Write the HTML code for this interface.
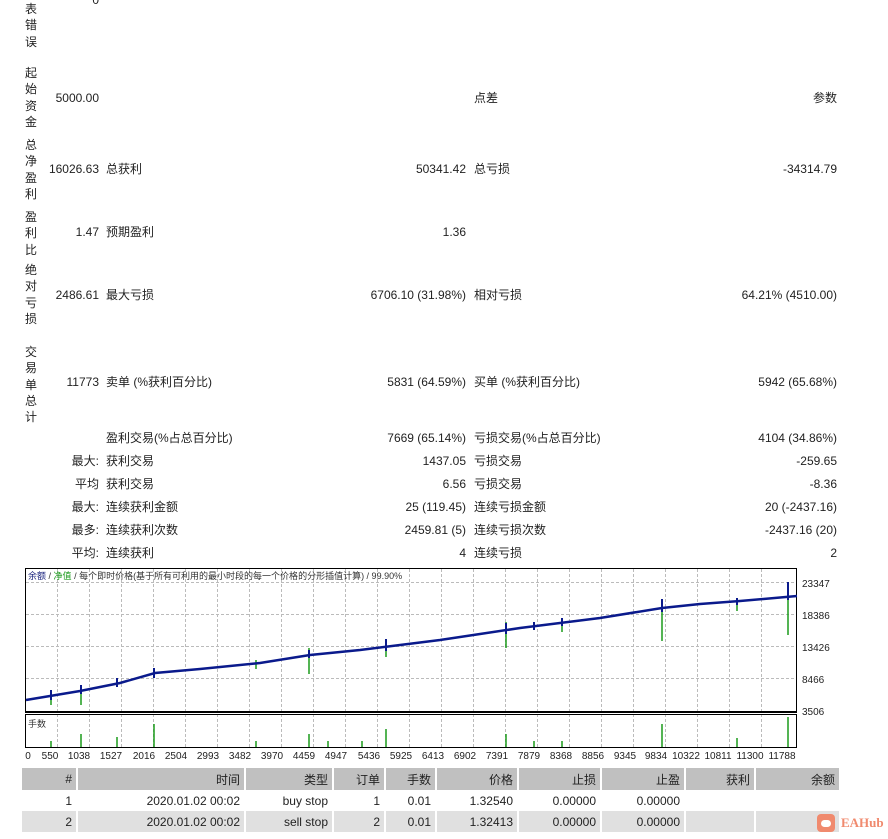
<!DOCTYPE html>
<html><head><meta charset="utf-8"><style>
body{margin:0;width:888px;height:839px;background:#fff;position:relative;overflow:hidden;font-family:"Liberation Sans","Noto Sans CJK SC",sans-serif;font-size:12px;color:#222}
.a{position:absolute;white-space:nowrap;line-height:14px}
.v{position:absolute;left:24px;width:14px;text-align:center;line-height:16.3px;font-size:12px}
.r{position:absolute;white-space:nowrap;line-height:14px;text-align:right}
table{position:absolute;left:22px;top:768px;border-collapse:collapse;font-size:12px;table-layout:fixed;width:818px}
td{text-align:right;padding:0 4px;height:21px;border-right:2px solid #fff;color:#222;box-sizing:border-box;overflow:hidden;white-space:nowrap}
tr.h td{background:#c0c0c0;height:22px}
tr.g td{background:#e0e0e0}
</style></head><body>
<div class="r" style="right:789px;top:-7px">0</div>
<div class="v" style="top:1px">表<br>错<br>误</div>
<div class="v" style="top:65px">起<br>始<br>资<br>金</div>
<div class="v" style="top:137px">总<br>净<br>盈<br>利</div>
<div class="v" style="top:209px">盈<br>利<br>比</div>
<div class="v" style="top:262px">绝<br>对<br>亏<br>损</div>
<div class="v" style="top:344px">交<br>易<br>单<br>总<br>计</div>

<div class="r" style="right:789px;top:91px">5000.00</div>
<div class="a" style="left:474px;top:91px">点差</div>
<div class="r" style="right:51px;top:91px">参数</div>

<div class="r" style="right:789px;top:162px">16026.63</div>
<div class="a" style="left:106px;top:162px">总获利</div>
<div class="r" style="right:422px;top:162px">50341.42</div>
<div class="a" style="left:474px;top:162px">总亏损</div>
<div class="r" style="right:51px;top:162px">-34314.79</div>

<div class="r" style="right:789px;top:225px">1.47</div>
<div class="a" style="left:106px;top:225px">预期盈利</div>
<div class="r" style="right:422px;top:225px">1.36</div>

<div class="r" style="right:789px;top:288px">2486.61</div>
<div class="a" style="left:106px;top:288px">最大亏损</div>
<div class="r" style="right:422px;top:288px">6706.10 (31.98%)</div>
<div class="a" style="left:474px;top:288px">相对亏损</div>
<div class="r" style="right:51px;top:288px">64.21% (4510.00)</div>

<div class="r" style="right:789px;top:375px">11773</div>
<div class="a" style="left:106px;top:375px">卖单 (%获利百分比)</div>
<div class="r" style="right:422px;top:375px">5831 (64.59%)</div>
<div class="a" style="left:474px;top:375px">买单 (%获利百分比)</div>
<div class="r" style="right:51px;top:375px">5942 (65.68%)</div>

<div class="a" style="left:106px;top:431px">盈利交易(%占总百分比)</div>
<div class="r" style="right:422px;top:431px">7669 (65.14%)</div>
<div class="a" style="left:474px;top:431px">亏损交易(%占总百分比)</div>
<div class="r" style="right:51px;top:431px">4104 (34.86%)</div>

<div class="r" style="right:789px;top:454px">最大:</div>
<div class="a" style="left:106px;top:454px">获利交易</div>
<div class="r" style="right:422px;top:454px">1437.05</div>
<div class="a" style="left:474px;top:454px">亏损交易</div>
<div class="r" style="right:51px;top:454px">-259.65</div>

<div class="r" style="right:789px;top:477px">平均</div>
<div class="a" style="left:106px;top:477px">获利交易</div>
<div class="r" style="right:422px;top:477px">6.56</div>
<div class="a" style="left:474px;top:477px">亏损交易</div>
<div class="r" style="right:51px;top:477px">-8.36</div>

<div class="r" style="right:789px;top:500px">最大:</div>
<div class="a" style="left:106px;top:500px">连续获利金额</div>
<div class="r" style="right:422px;top:500px">25 (119.45)</div>
<div class="a" style="left:474px;top:500px">连续亏损金额</div>
<div class="r" style="right:51px;top:500px">20 (-2437.16)</div>

<div class="r" style="right:789px;top:523px">最多:</div>
<div class="a" style="left:106px;top:523px">连续获利次数</div>
<div class="r" style="right:422px;top:523px">2459.81 (5)</div>
<div class="a" style="left:474px;top:523px">连续亏损次数</div>
<div class="r" style="right:51px;top:523px">-2437.16 (20)</div>

<div class="r" style="right:789px;top:546px">平均:</div>
<div class="a" style="left:106px;top:546px">连续获利</div>
<div class="r" style="right:422px;top:546px">4</div>
<div class="a" style="left:474px;top:546px">连续亏损</div>
<div class="r" style="right:51px;top:546px">2</div>

<svg style="position:absolute;left:0;top:560px" width="888" height="210" font-family="Liberation Sans,Noto Sans CJK SC,sans-serif" font-size="10">
<g stroke="#bbb" stroke-dasharray="3,2" stroke-width="1">
<line x1="26" x2="796" y1="22.5" y2="22.5"/><line x1="26" x2="796" y1="54.5" y2="54.5"/><line x1="26" x2="796" y1="86.5" y2="86.5"/><line x1="26" x2="796" y1="118.5" y2="118.5"/>
<line x1="57.5" x2="57.5" y1="9" y2="187"/><line x1="89.5" x2="89.5" y1="9" y2="187"/><line x1="121.5" x2="121.5" y1="9" y2="187"/><line x1="153.5" x2="153.5" y1="9" y2="187"/><line x1="185.5" x2="185.5" y1="9" y2="187"/><line x1="217.5" x2="217.5" y1="9" y2="187"/><line x1="249.5" x2="249.5" y1="9" y2="187"/><line x1="281.5" x2="281.5" y1="9" y2="187"/><line x1="313.5" x2="313.5" y1="9" y2="187"/><line x1="345.5" x2="345.5" y1="9" y2="187"/><line x1="377.5" x2="377.5" y1="9" y2="187"/><line x1="409.5" x2="409.5" y1="9" y2="187"/><line x1="441.5" x2="441.5" y1="9" y2="187"/><line x1="473.5" x2="473.5" y1="9" y2="187"/><line x1="505.5" x2="505.5" y1="9" y2="187"/><line x1="537.5" x2="537.5" y1="9" y2="187"/><line x1="569.5" x2="569.5" y1="9" y2="187"/><line x1="601.5" x2="601.5" y1="9" y2="187"/><line x1="633.5" x2="633.5" y1="9" y2="187"/><line x1="665.5" x2="665.5" y1="9" y2="187"/><line x1="697.5" x2="697.5" y1="9" y2="187"/><line x1="729.5" x2="729.5" y1="9" y2="187"/><line x1="761.5" x2="761.5" y1="9" y2="187"/>
</g>
<rect x="25.5" y="8.5" width="771" height="143" fill="none" stroke="#000"/>
<line x1="25" x2="797" y1="152.5" y2="152.5" stroke="#000"/>
<rect x="25.5" y="154.5" width="771" height="33" fill="none" stroke="#000"/>
<g stroke="#1a9a1a" stroke-width="1.5">
<line x1="51" x2="51" y1="132" y2="145"/><line x1="81" x2="81" y1="128" y2="145"/><line x1="309" x2="309" y1="88" y2="114"/><line x1="386" x2="386" y1="80" y2="97"/><line x1="506" x2="506" y1="62" y2="88"/><line x1="662" x2="662" y1="40" y2="81"/><line x1="788" x2="788" y1="30" y2="75"/><line x1="256" x2="256" y1="100" y2="109"/><line x1="562" x2="562" y1="62" y2="72"/><line x1="737" x2="737" y1="40" y2="51"/>
<line x1="51" x2="51" y1="181" y2="187"/><line x1="81" x2="81" y1="174" y2="187"/><line x1="117" x2="117" y1="177" y2="187"/><line x1="154" x2="154" y1="164" y2="187"/><line x1="256" x2="256" y1="181" y2="187"/><line x1="309" x2="309" y1="174" y2="187"/><line x1="328" x2="328" y1="181" y2="187"/><line x1="362" x2="362" y1="181" y2="187"/><line x1="386" x2="386" y1="169" y2="187"/><line x1="506" x2="506" y1="174" y2="187"/><line x1="534" x2="534" y1="181" y2="187"/><line x1="562" x2="562" y1="181" y2="187"/><line x1="662" x2="662" y1="164" y2="187"/><line x1="737" x2="737" y1="178" y2="187"/><line x1="788" x2="788" y1="157" y2="187"/>
</g>
<polyline fill="none" stroke="#0a1a8c" stroke-width="2.5" points="26,140 50,136 80,131 120,123 155,113 200,109 260,103 310,95 360,90 400,85 440,80 480,74 520,68 560,63 600,58 662,48 700,44 740,41 797,36"/>
<g stroke="#0a1a8c" stroke-width="2">
<line x1="51" x2="51" y1="130" y2="140"/><line x1="81" x2="81" y1="125" y2="134"/><line x1="117" x2="117" y1="118" y2="127"/><line x1="154" x2="154" y1="108" y2="118"/><line x1="309" x2="309" y1="90" y2="98"/><line x1="386" x2="386" y1="79" y2="91"/><line x1="506" x2="506" y1="63" y2="74"/><line x1="534" x2="534" y1="62" y2="70"/><line x1="562" x2="562" y1="58" y2="66"/><line x1="662" x2="662" y1="39" y2="52"/><line x1="737" x2="737" y1="38" y2="45"/><line x1="788" x2="788" y1="22" y2="40"/>
</g>
<text x="28" y="19" fill="#1a237e" font-size="9">余额 <tspan fill="#333">/</tspan> <tspan fill="#1a9a1a">净值</tspan><tspan fill="#333"> / 每个即时价格(基于所有可利用的最小时段的每一个价格的分形插值计算) / 99.90%</tspan></text>
<text x="28" y="167" fill="#333" font-size="9">手数</text>
<g fill="#222">
<text x="802" y="27">23347</text><text x="802" y="59">18386</text><text x="802" y="91">13426</text><text x="802" y="123">8466</text><text x="802" y="155">3506</text>
</g>
<g fill="#222" text-anchor="middle">
<text x="28" y="199">0</text><text x="50" y="199">550</text><text x="79" y="199">1038</text><text x="111" y="199">1527</text><text x="144" y="199">2016</text><text x="176" y="199">2504</text><text x="208" y="199">2993</text><text x="240" y="199">3482</text><text x="272" y="199">3970</text><text x="304" y="199">4459</text><text x="336" y="199">4947</text><text x="369" y="199">5436</text><text x="401" y="199">5925</text><text x="433" y="199">6413</text><text x="465" y="199">6902</text><text x="497" y="199">7391</text><text x="529" y="199">7879</text><text x="561" y="199">8368</text><text x="593" y="199">8856</text><text x="625" y="199">9345</text><text x="656" y="199">9834</text><text x="686" y="199">10322</text><text x="718" y="199">10811</text><text x="750" y="199">11300</text><text x="782" y="199">11788</text>
</g>
</svg>

<table>
<colgroup><col style="width:55px"><col style="width:168px"><col style="width:88px"><col style="width:52px"><col style="width:51px"><col style="width:82px"><col style="width:83px"><col style="width:84px"><col style="width:70px"><col style="width:85px"></colgroup>
<tr class="h"><td>#</td><td>时间</td><td>类型</td><td>订单</td><td>手数</td><td>价格</td><td>止损</td><td>止盈</td><td>获利</td><td>余额</td></tr>
<tr><td>1</td><td>2020.01.02 00:02</td><td>buy stop</td><td>1</td><td>0.01</td><td>1.32540</td><td>0.00000</td><td>0.00000</td><td></td><td></td></tr>
<tr class="g"><td>2</td><td>2020.01.02 00:02</td><td>sell stop</td><td>2</td><td>0.01</td><td>1.32413</td><td>0.00000</td><td>0.00000</td><td></td><td></td></tr>
</table>
<div style="position:absolute;left:817px;top:814px;width:18px;height:18px;background:#f08a6e;border-radius:4px"><div style="position:absolute;left:4px;top:6px;width:10px;height:7px;background:#fff;border-radius:5px"></div></div>
<div class="a" style="left:841px;top:816px;color:#f08a6e;font-weight:bold;font-family:'Liberation Serif',serif;font-size:13px">EAHub</div>
</body></html>
